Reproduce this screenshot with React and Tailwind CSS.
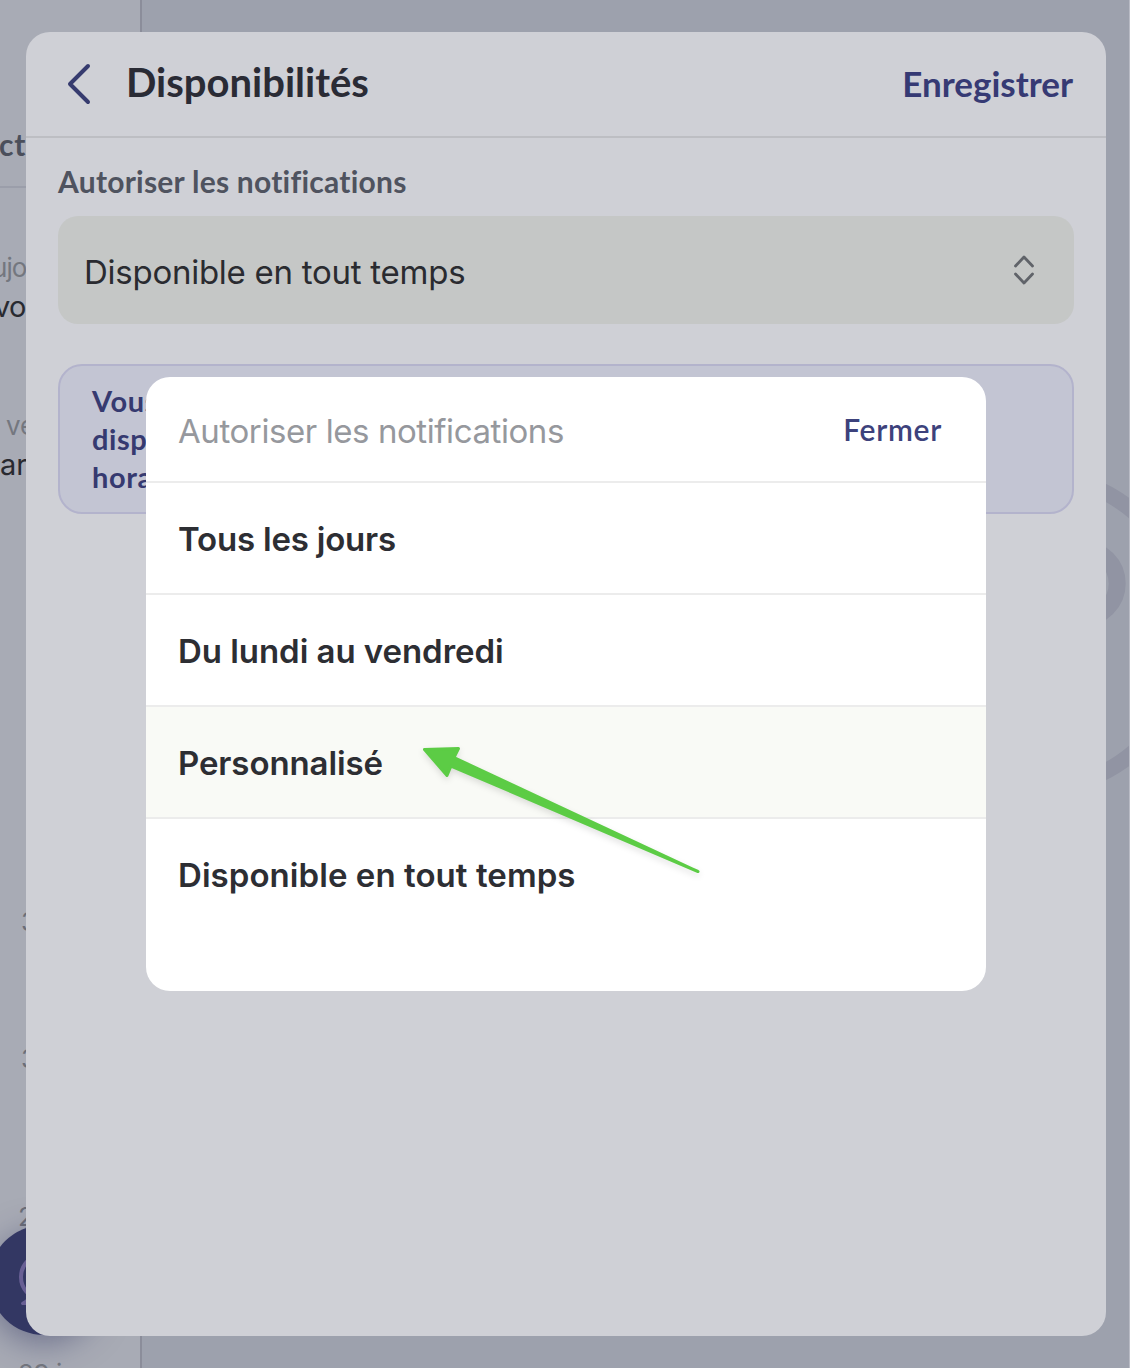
const LATO = "font-[Lato,'Liberation_Sans',sans-serif]";
const options = [
  { label: "Tous les jours", tracking: "tracking-[-0.2px]" },
  { label: "Du lundi au vendredi", tracking: "tracking-[-0.05px]" },
  { label: "Personnalisé", tracking: "tracking-[-0.1px]" },
  { label: "Disponible en tout temps", tracking: "tracking-[0.06px]" },
];

function Sidebar() {
  return (
    <aside className="h-full w-[142px] shrink-0 overflow-hidden border-r-2 border-[#8b8d9a] bg-[#a8abb5] font-[Inter,sans-serif] whitespace-nowrap">
      <div className="flex h-[188px] items-end border-b-2 border-[#9b9eaa] pb-[24px]">
        <span className="-ml-px font-[Lato,'Liberation_Sans',sans-serif] text-[30px] leading-9 font-bold tracking-[0.8px] text-[#4b4f5b]">ct</span>
      </div>
      <div className="-ml-[8px] pt-[62px] text-[26px] leading-9 tracking-[-0.9px] text-[#74777f]">ujo</div>
      <div className="-ml-[6px] text-[29px] leading-[42px] tracking-[-0.8px] text-[#292a30]">vo</div>
      <div className="pt-[80px] pl-[6px] text-[26px] leading-9 text-[#74777f]">ve</div>
      <div className="text-[29px] leading-[42px] text-[#292a30]">ar</div>
      <div className="pt-[418px] pl-[21px] text-[26px] leading-9 text-[#6b6e78]">3</div>
      <div className="pt-[101px] pl-[21px] text-[26px] leading-9 text-[#6b6e78]">3</div>
      <div className="pt-[122px] pl-[18px] text-[26px] leading-9 text-[#6b6e78]">2</div>
      <div className="pt-[121px] pl-[18px] text-[26px] leading-9 tracking-[-0.4px] text-[#74777f]">29 j</div>
    </aside>
  );
}

function ChatBubble() {
  return (
    <div className="absolute top-[1225px] -left-[11px] size-[110px] rounded-full bg-[#333763] shadow-[0_8px_32px_rgba(51,55,99,0.5)]">
      <svg className="size-full" viewBox="0 0 110 110" fill="none">
        <ellipse cx="51" cy="52" rx="19" ry="21" stroke="#685f94" strokeWidth="4" />
        <path d="M32 79c0-3 4-3 5-5h6v6H33z" fill="#685f94" />
      </svg>
    </div>
  );
}

function Backdrop() {
  return (
    <div className="flex h-full">
      <Sidebar />
      <main className="relative grow overflow-hidden border-r border-[#b9bbc5] bg-[#9da1ad]">
        <svg className="absolute top-[460px] right-0 h-[350px] w-[60px]" viewBox="1069 460 60 350" fill="none" stroke="#9194a3">
          <circle cx="1032" cy="632" r="157.500" strokeWidth="16" />
          <circle cx="1082.500" cy="583.500" r="34.700" strokeWidth="17" />
        </svg>
      </main>
    </div>
  );
}

function SettingsPanel() {
  return (
    <section className={`${LATO} absolute top-8 left-[26px] h-[1304px] w-[1080px] overflow-hidden rounded-[24px] bg-[#cfd0d6]`}>
      <header className="flex h-[106px] items-center border-b-2 border-[#bdbec3] pr-[33px] pl-[40px]">
        <svg className="h-[42px] w-[26px]" viewBox="0 0 26 42" fill="none" stroke="#363b6f" strokeWidth="4" strokeLinecap="round" strokeLinejoin="round">
          <path d="M22 3 4 21l18 18" />
        </svg>
        <h1 className="-mt-[4px] ml-[34px] text-[40px] leading-[48px] font-bold text-[#2a2b35]">Disponibilités</h1>
        <button className="-mt-[2px] ml-auto text-[35px] leading-[42px] font-bold text-[#363a74]">Enregistrer</button>
      </header>
      <div className="px-8">
        <h2 className="pt-[25px] text-[30px] leading-9 font-bold tracking-[0.24px] text-[#4f535f]">Autoriser les notifications</h2>
        <div className="mt-[17px] flex h-[108px] items-center justify-between rounded-[20px] bg-[#c5c7c6] pr-[39px] pl-[26px] font-[Inter,sans-serif]">
          <span className="mt-[4px] text-[33px] leading-10 tracking-[-0.26px] text-[#2a2b30]">Disponible en tout temps</span>
          <svg className="h-[32px] w-[22px]" viewBox="0 0 22 32" fill="none" stroke="#606369" strokeWidth="2.800" strokeLinecap="round" strokeLinejoin="round">
            <path d="m2.500 12 8.500-9 8.500 9M2.500 20l8.500 9 8.500-9" />
          </svg>
        </div>
        <p className="mt-10 h-[150px] rounded-[24px] border-2 border-[#b3b3cc] bg-[#c3c5d3] px-8 pt-[16px] text-[29px] leading-[38px] font-bold tracking-[0.6px] text-[#363a70]">
          Vous<br />disponible<br />horaire
        </p>
      </div>
    </section>
  );
}

function Picker() {
  return (
    <section className="absolute top-[377px] left-[146px] h-[614px] w-[840px] overflow-hidden rounded-[24px] bg-white font-[Inter,sans-serif]">
      <header className="flex h-[106px] items-center justify-between border-b-2 border-[#ececec] pr-[44px] pl-8">
        <h2 className="mt-1 text-[33px] leading-10 tracking-[-0.42px] text-[#96989d]">Autoriser les notifications</h2>
        <button className="font-[Lato,'Liberation_Sans',sans-serif] text-[30px] leading-9 font-semibold tracking-[0.7px] text-[#3d427c]">Fermer</button>
      </header>
      <ul>
        {options.map(({ label, tracking }, i) => (
          <li key={label} className={`flex h-[112px] items-center border-b-2 pl-8 ${i < 3 ? "border-[#ececec]" : "border-transparent"} ${i === 2 ? "bg-[#f9faf6]" : ""}`}>
            <span className={`mt-px text-[33px] leading-10 font-semibold text-[#2d2e33] ${tracking}`}>{label}</span>
          </li>
        ))}
      </ul>
    </section>
  );
}

function Arrow() {
  return (
    <svg className="absolute top-[735px] left-[410px] h-[150px] w-[300px] drop-shadow-[0_3px_3px_rgba(0,0,0,0.12)]" viewBox="410 735 300 150">
      <path d="M424.500 749.500 458.500 748.500 454 757.500 698 871.500 451 766 447 775.500Z" fill="#5ccc45" stroke="#5ccc45" strokeWidth="3" strokeLinejoin="round" />
    </svg>
  );
}

export default function App() {
  return (
    <div className="relative h-[1368px] w-[1130px] overflow-hidden">
      <Backdrop />
      <ChatBubble />
      <SettingsPanel />
      <Picker />
      <Arrow />
    </div>
  );
}
